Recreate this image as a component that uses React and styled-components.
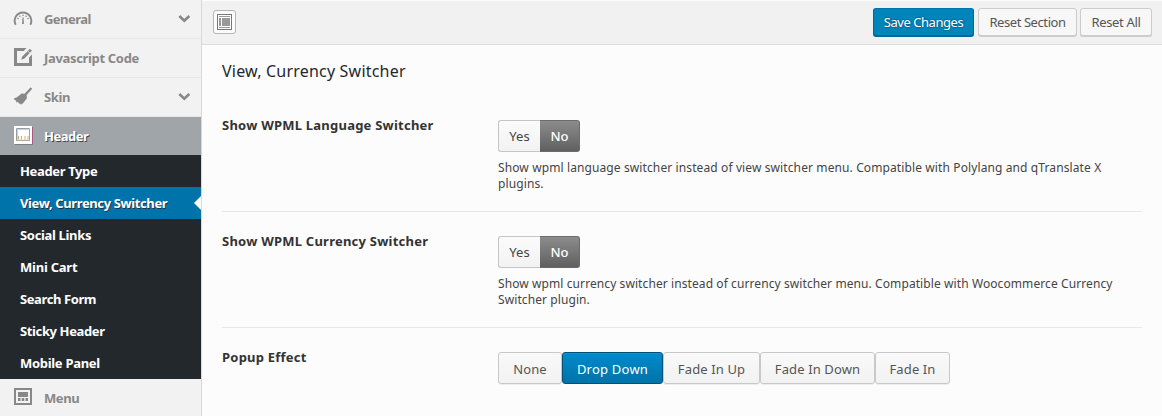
import React from 'react';
import styled, { createGlobalStyle, css } from 'styled-components';

const Global = createGlobalStyle`
  * { box-sizing: border-box; }
  body { margin: 0; background: #fcfcfc; font-family: "Noto Sans", "Open Sans", sans-serif; font-size: 13px; color: #333; }
  button { font-family: inherit; margin: 0; }
`;

const Page = styled.div`
  display: flex;
  height: 416px;
  overflow: hidden;
`;

const Sidebar = styled.nav`
  width: 202px;
  flex: none;
  background: #f2f2f2;
  border-right: 1px solid #d8d8d8;
`;

const MenuItem = styled.div`
  display: flex;
  align-items: center;
  height: 39px;
  padding: 0 10px 0 13px;
  border-bottom: 1px solid #e7e7e7;
  font-weight: 700;
  color: #888;
  svg { flex: none; display: block; }
  ${(p) => p.$active && css`
    height: 38px;
    border-bottom: 0;
    background: #a0a5aa;
    color: #fff;
    text-shadow: 1px 1px rgba(0, 0, 0, 0.6);
  `}
`;

const MenuLabel = styled.span`
  flex: 1;
  margin-left: 11px;
  line-height: 18px;
  letter-spacing: ${(p) => p.$track ?? -0.4}px;
`;

const SubMenu = styled.div`
  background: #23282d;
`;

const SubItem = styled.div`
  position: relative;
  height: 32px;
  padding-left: 20px;
  line-height: 32px;
  font-weight: 700;
  color: #fff;
  letter-spacing: ${(p) => p.$track || 0}px;
  ${(p) => p.$active && css`
    background: #0073aa;
    text-shadow: 1px 1px #23343f;
    &::after {
      content: "";
      position: absolute;
      right: 0;
      top: 9px;
      border: 7px solid transparent;
      border-left: 0;
      border-right-color: #fcfcfc;
    }
  `}
`;

const Main = styled.main`
  flex: 1;
  min-width: 0;
`;

const Toolbar = styled.header`
  display: flex;
  align-items: flex-start;
  gap: 4px;
  height: 45px;
  padding: 7px 10px 0 11px;
  background: #f1f1f1;
  border-top: 1px solid #fcfcfc;
  border-bottom: 1px solid #dedede;
`;

const ResetGroup = styled.div`
  display: flex;
  gap: 3px;
`;

const ExpandButton = styled.button`
  width: 23px;
  height: 24px;
  margin: 2px auto 0 0;
  padding: 0;
  display: flex;
  align-items: center;
  justify-content: center;
  background: #fbfbfb;
  border: 1px solid #b5b5b5;
  border-radius: 3px;
`;

const ToolButton = styled.button`
  width: ${(p) => p.$width}px;
  height: 28px;
  padding: 0 0 1px;
  border: 1px solid #ccc;
  border-radius: 3px;
  background: #f7f7f7;
  box-shadow: 0 1px 0 #ccc;
  font-size: 13px;
  color: #555;
  white-space: nowrap;
  letter-spacing: ${(p) => p.$track || 0}px;
  ${(p) => p.$primary && css`
    background: #0085ba;
    border-color: #0073aa #006799 #006799;
    box-shadow: 0 1px 0 #006799;
    color: #fff;
    text-shadow: 0 -1px 1px #006799, 1px 0 1px #006799, 0 1px 1px #006799;
  `}
`;

const Content = styled.section`
  padding: 15px 20px 0;
`;

const Title = styled.h2`
  margin: 0;
  font-size: 16px;
  font-weight: 400;
  line-height: 22px;
  letter-spacing: 0.2px;
  color: #23282d;
`;

const Field = styled.div`
  display: flex;
  height: ${(p) => p.$height}px;
  padding-top: ${(p) => p.$top}px;
  border-bottom: ${(p) => (p.$last ? '0' : '1px solid #e7e7e7')};
`;

const FieldLabel = styled.div`
  width: 276px;
  flex: none;
  margin-top: -4px;
  line-height: 18px;
  font-weight: 700;
  color: #333;
  letter-spacing: 0.23px;
`;

const Switch = styled.div`
  display: flex;
  height: 32px;
  width: 82px;
`;

const SwitchOption = styled.button`
  width: ${(p) => (p.$on ? 40 : 42)}px;
  padding: 0;
  border: 1px solid #c5c5c5;
  border-right: 0;
  border-radius: 3px 0 0 3px;
  background: linear-gradient(#fbfbfb, #f2f2f2);
  font-size: 13px;
  color: #444;
  ${(p) => p.$on && css`
    border: 1px solid #6b6b6b;
    border-left: 0;
    border-radius: 0 3px 3px 0;
    background: linear-gradient(#8c8c8c, #606060);
    color: #fff;
    font-weight: 500;
  `}
`;

const Description = styled.p`
  margin: 8px 0 0;
  font-size: 12px;
  line-height: 16px;
  color: #444;
  white-space: nowrap;
  letter-spacing: ${(p) => p.$track || 0}px;
`;

const ButtonSet = styled.div`
  display: flex;
`;

const SetOption = styled.button`
  width: ${(p) => p.$width}px;
  height: 32px;
  padding: 1px 0 0;
  border: 1px solid #c8c8c8;
  border-radius: 3px;
  background: linear-gradient(#f9f9f9, #f2f2f2);
  box-shadow: 0 1px 0 rgba(0, 0, 0, 0.06);
  font-size: 13px;
  color: #555;
  white-space: nowrap;
  letter-spacing: 0.12px;
  ${(p) => p.$on && css`
    border-color: #00527a;
    background: linear-gradient(#008acb, #0073a8);
    box-shadow: inset 0 1px 0 #0097de;
    color: #fff;
    letter-spacing: 0.22px;
  `}
`;

const Chevron = () => (
  <svg width="13" height="10" viewBox="0 0 13 10">
    <path d="M1.3 2l5 4.800 5-4.800" fill="none" stroke="#888" strokeWidth="2.6" />
  </svg>
);

const GaugeIcon = () => (
  <svg width="20" height="20" viewBox="0 0 20 20" fill="#888">
    <path d="M2.700 15.800A8.300 8.300 0 1 1 17.300 15.800" fill="none" stroke="#888" strokeWidth="1.900" />
    <path d="M9.400 8.500h1.200l.3 6.500h-1.800z" />
    <circle cx="5" cy="9.500" r=".8" /><circle cx="6.900" cy="7.200" r=".8" />
    <circle cx="10" cy="6.300" r=".8" /><circle cx="13.100" cy="7.200" r=".8" /><circle cx="15" cy="9.500" r=".8" />
  </svg>
);

const EditIcon = () => (
  <svg width="20" height="20" viewBox="0 0 20 20" fill="#888">
    <path d="M1 0h12.500L10.800 3H4v12h12V9.500L19 6.500V18H1z" />
    <path d="M16.900.8l2 2-7.700 7.900-3 1 .9-3z" />
    <path d="M14.600 2.900l2.300 2.300" stroke="#f2f2f2" strokeWidth=".8" />
  </svg>
);

const BroomIcon = () => (
  <svg width="20" height="20" viewBox="0 0 20 20" fill="#888">
    <path d="M17.700.2l1.500 1.500-5.600 6.300.3 3.300-3.400 4.500-2.600 2-1-1.500-.8.700-1-2-1.600.4-.5-1.800L1.200 12.800v-1.500C4.500 10.700 7 7.700 8.500 6.500l3 .3z" />
  </svg>
);

const MenuPanelIcon = () => (
  <svg width="20" height="20" viewBox="0 0 20 20" fill="#888">
    <rect x="2" y="1" width="16" height="15" fill="#f2f2f2" stroke="#888" strokeWidth="2" />
    <rect x="5" y="4" width="10" height="5" />
    <rect x="5" y="10" width="2.500" height="3" />
    <rect x="8.700" y="10" width="2.600" height="3" />
    <rect x="12.500" y="10" width="2.500" height="3" />
  </svg>
);

const HeaderPanelIcon = () => (
  <svg width="20" height="20" viewBox="0 0 20 20">
    <path d="M2 18.300h17.500" stroke="#75787b" />
    <path d="M19.400 1v17.500" stroke="#a84f78" />
    <rect x="1" y="0" width="18" height="18" fill="#fff" />
    <path d="M3.500 14V2.500h13" fill="none" stroke="#8f9fac" />
    <path d="M4.500 13V3.500h11" fill="none" stroke="#c9c2bd" strokeWidth=".8" />
    <path d="M16.500 2.500V14" stroke="#c79b72" />
    <path d="M3 14.300h14" stroke="#a89684" />
    <path d="M5.500 10v3.500M8.500 10v3.500M12 10v3.500M15 10v3.500" stroke="#d9ae70" />
  </svg>
);

const LayoutIcon = () => (
  <svg width="15" height="16" viewBox="0 0 15 16">
    <rect x=".5" y=".5" width="14" height="15" fill="#fff" stroke="#777" />
    <rect x="2" y="2" width="11" height="1" fill="#999" />
    <rect x="2" y="4" width="2" height="8" fill="#999" />
    <rect x="5" y="4" width="8" height="8" fill="#999" />
    <rect x="2" y="13" width="11" height="1" fill="#999" />
  </svg>
);

const subItems = [
  ['Header Type', -0.36],
  ['View, Currency Switcher', -0.38],
  ['Social Links', -0.33],
  ['Mini Cart', -0.24],
  ['Search Form', -0.4],
  ['Sticky Header', -0.38],
  ['Mobile Panel', -0.3],
];

const YesNo = () => (
  <Switch>
    <SwitchOption>Yes</SwitchOption>
    <SwitchOption $on>No</SwitchOption>
  </Switch>
);

export default function App() {
  return (
    <>
      <Global />
      <Page>
        <Sidebar>
          <MenuItem><GaugeIcon /><MenuLabel $track={-0.55}>General</MenuLabel><Chevron /></MenuItem>
          <MenuItem><EditIcon /><MenuLabel $track={-0.33}>Javascript Code</MenuLabel></MenuItem>
          <MenuItem><BroomIcon /><MenuLabel>Skin</MenuLabel><Chevron /></MenuItem>
          <MenuItem $active><HeaderPanelIcon /><MenuLabel $track={-0.5}>Header</MenuLabel></MenuItem>
          <SubMenu>
            {subItems.map(([label, track], i) => (
              <SubItem key={label} $active={i === 1} $track={track}>{label}</SubItem>
            ))}
          </SubMenu>
          <MenuItem><MenuPanelIcon /><MenuLabel>Menu</MenuLabel></MenuItem>
        </Sidebar>
        <Main>
          <Toolbar>
            <ExpandButton aria-label="Expand"><LayoutIcon /></ExpandButton>
            <ToolButton $primary $width={101} $track={-0.45}>Save Changes</ToolButton>
            <ResetGroup>
              <ToolButton $width={99} $track={-0.42}>Reset Section</ToolButton>
              <ToolButton $width={72} $track={-0.33}>Reset All</ToolButton>
            </ResetGroup>
          </Toolbar>
          <Content>
            <Title>View, Currency Switcher</Title>
            <Field $height={130} $top={38}>
              <FieldLabel>Show WPML Language Switcher</FieldLabel>
              <div>
                <YesNo />
                <Description $track={0.11}>
                  Show wpml language switcher instead of view switcher menu. Compatible with Polylang and qTranslate X<br />plugins.
                </Description>
              </div>
            </Field>
            <Field $height={116} $top={24}>
              <FieldLabel>Show WPML Currency Switcher</FieldLabel>
              <div>
                <YesNo />
                <Description $track={0.09}>
                  Show wpml currency switcher instead of currency switcher menu. Compatible with Woocommerce Currency<br />Switcher plugin.
                </Description>
              </div>
            </Field>
            <Field $height={88} $top={24} $last>
              <FieldLabel>Popup Effect</FieldLabel>
              <ButtonSet>
                <SetOption $width={64}>None</SetOption>
                <SetOption $width={101} $on>Drop Down</SetOption>
                <SetOption $width={97}>Fade In Up</SetOption>
                <SetOption $width={115}>Fade In Down</SetOption>
                <SetOption $width={75}>Fade In</SetOption>
              </ButtonSet>
            </Field>
          </Content>
        </Main>
      </Page>
    </>
  );
}
